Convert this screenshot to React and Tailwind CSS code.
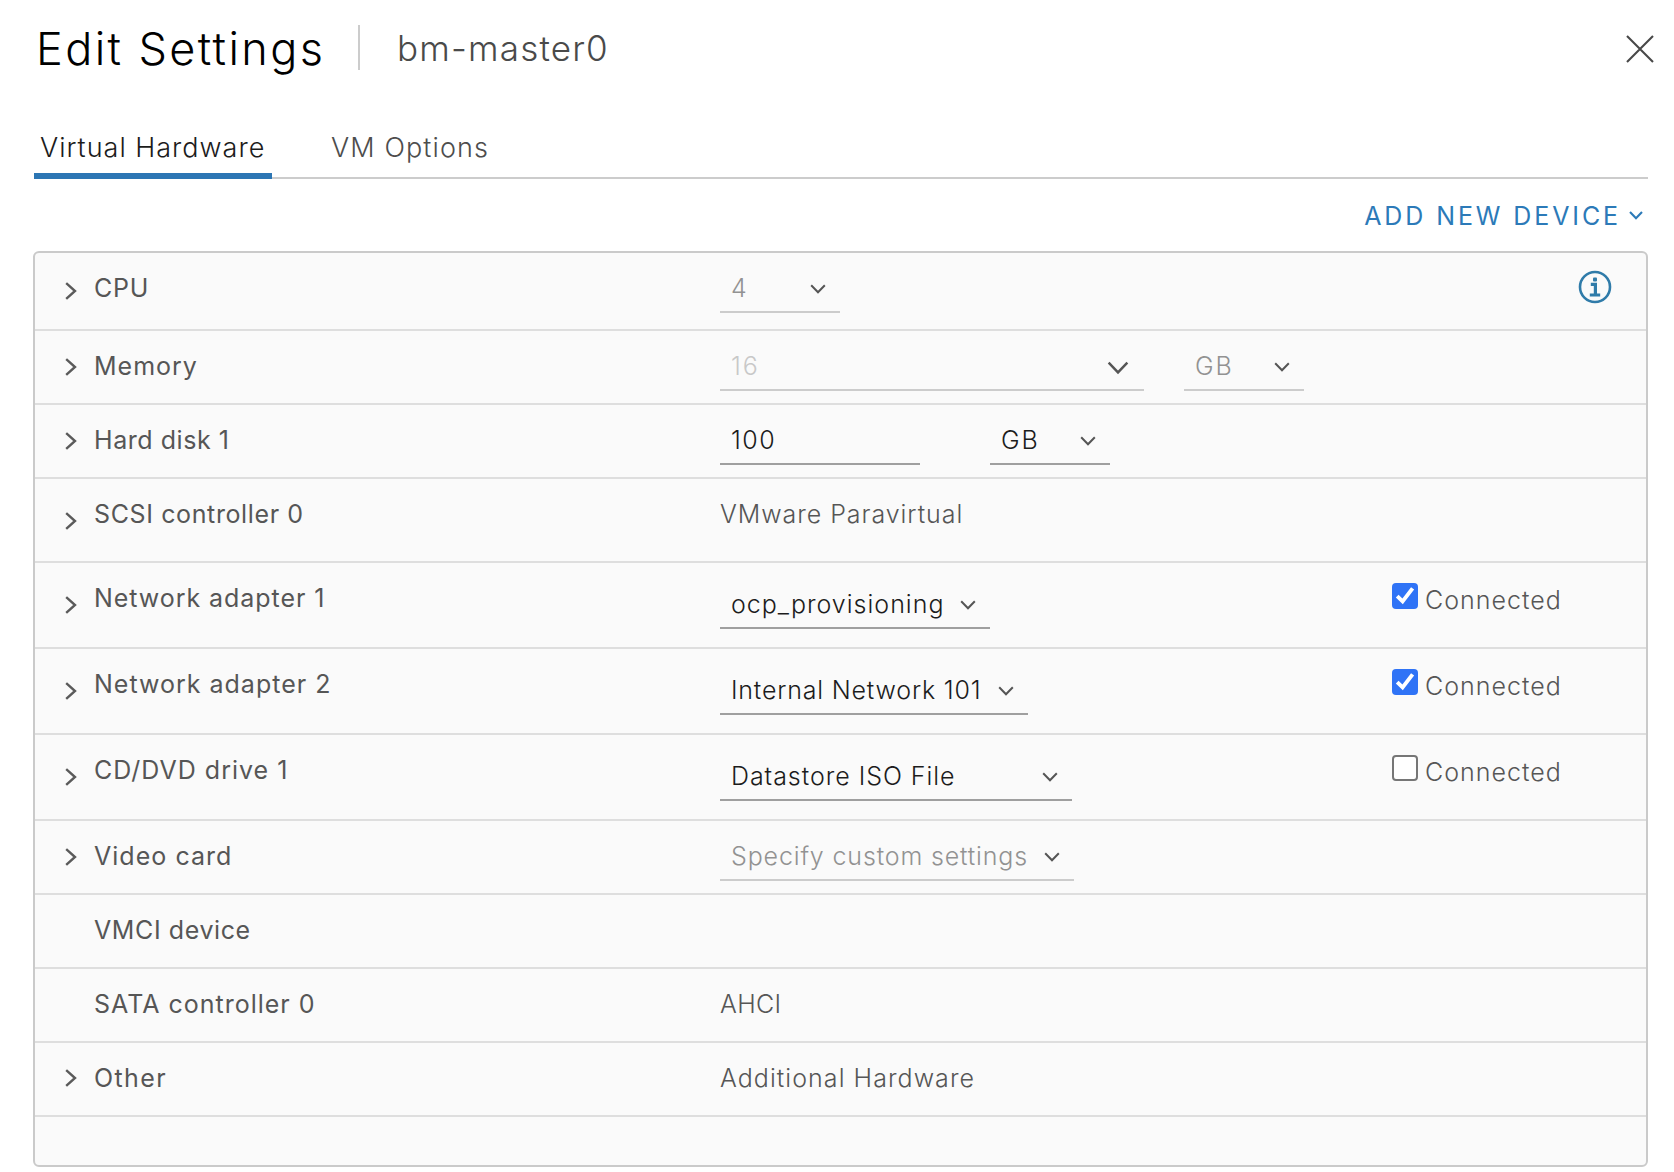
import React from "react";

const chevronDown = "M1.2 1.2 L8 8.2 L14.8 1.2";

function ChevronDown({ className = "", large = false }) {
  return (
    <svg
      viewBox="0 0 16 10"
      className={`shrink-0 ${large ? "mt-1 h-[14px] w-[22px]" : "mt-[2px] h-[10px] w-4"} ${className}`}
      fill="none"
      preserveAspectRatio="none"
    >
      <path d={chevronDown} stroke="currentColor" strokeWidth={large ? 1.8 : 2} />
    </svg>
  );
}

function Select({ text, tracking, width, gap = "mt-3", disabled, faded, large, end = "pr-[14px]", arrow = true, className = "" }) {
  const color = faded ? "text-[#c8c8c8]" : disabled ? "text-[#929292]" : "text-[#1c1c1c]";
  const line = disabled ? "border-[#cccccc]" : "border-[#9f9f9f]";
  return (
    <div className={`flex h-12 items-center justify-between border-b-2 pl-[11px] ${gap} ${width} ${line} ${end} ${className}`}>
      <span className={`whitespace-nowrap text-[25px] font-[330] leading-9 ${tracking} ${color}`}>{text}</span>
      {arrow && <ChevronDown large={large} className="text-[#555555]" />}
    </div>
  );
}

function Value({ text, tracking }) {
  return (
    <span className={`mt-[17px] whitespace-nowrap text-[25px] font-[330] leading-9 text-[#565656] ${tracking}`}>{text}</span>
  );
}

function Connected({ checked }) {
  return (
    <label className="flex w-[254px] items-start">
      <span
        className={`mt-5 flex size-[26px] items-center justify-center rounded-[4px] ${
          checked ? "bg-[#2f73f6]" : "border-2 border-[#767676] bg-white"
        }`}
      >
        {checked && (
          <svg viewBox="0 0 26 26" className="size-[26px]" fill="none">
            <path d="M5.2 13.2 L10.6 18.4 L20.6 5.4" stroke="#fff" strokeWidth="3.9" />
          </svg>
        )}
      </span>
      <span className="ml-[7px] mt-[19px] whitespace-nowrap text-[25px] font-[330] leading-9 tracking-[1px] text-[#565656]">
        Connected
      </span>
    </label>
  );
}

function Row({ label, tracking, height, arrow, children, right }) {
  return (
    <div className={`flex items-start border-b-2 border-[#dedede] ${height}`}>
      <div className="flex w-[59px] pl-[30px]">
        {arrow && (
          <svg viewBox="0 0 12 18" className={`h-[18px] w-3 ${arrow}`} fill="none">
            <path d="M1.2 1.2 L10 9 L1.2 16.8" stroke="#5a5a5a" strokeWidth="2.4" />
          </svg>
        )}
      </div>
      <div className={`mt-[17px] w-[626px] whitespace-nowrap text-[25px] leading-9 text-[#565656] ${tracking}`}>{label}</div>
      <div className="flex flex-1 items-start">{children}</div>
      {right}
    </div>
  );
}

export default function App() {
  return (
    <div className="flex h-[1172px] w-[1674px] flex-col bg-white font-['Inter',sans-serif] [font-variant-ligatures:none]">
      <header className="flex h-[100px] items-start pl-[36px] pr-5">
        <h1 className="mt-[18px] w-[322px] whitespace-nowrap text-[45px] font-[260] leading-[62px] tracking-[2.4px] text-black">
          Edit Settings
        </h1>
        <div className="mt-[25px] h-[45px] w-[2px] bg-[#cccccc]" />
        <div className="ml-[37px] mt-[23px] flex-1 whitespace-nowrap text-[35px] font-[260] leading-[50px] tracking-[1.2px] text-[#4a4a4a]">
          bm-master0
        </div>
        <svg viewBox="0 0 28 28" className="mt-[35px] size-7" fill="none">
          <path d="M1 1 L27 27 M27 1 L1 27" stroke="#484848" strokeWidth="2.1" />
        </svg>
      </header>

      <nav className="ml-[34px] mr-[26px] flex h-[79px] items-end border-b-2 border-[#cccccc]">
        <div className="-mb-[2px] flex h-[58px] w-[238px] items-start border-b-[6px] border-[#2c76b4] pl-[6px]">
          <span className="mt-[9px] whitespace-nowrap text-[27px] font-[330] leading-9 tracking-[1px] text-[#1c1c1c]">
            Virtual Hardware
          </span>
        </div>
        <div className="-mb-[2px] flex h-[58px] items-start pl-[59px]">
          <span className="mt-[9px] whitespace-nowrap text-[27px] font-[330] leading-9 tracking-[1.1px] text-[#4d4d4d]">
            VM Options
          </span>
        </div>
      </nav>

      <div className="flex h-[72px] items-center justify-end pr-[31px] text-[#2c7ab8]">
        <span className="mt-[2px] whitespace-nowrap text-[25px] leading-9 tracking-[2.9px]">ADD NEW DEVICE</span>
        <svg viewBox="0 0 14 9" className="ml-[8px] h-[9px] w-[14px]" fill="none">
          <path d="M1 1 L7 7.2 L13 1" stroke="currentColor" strokeWidth="2.1" />
        </svg>
      </div>

      <section className="ml-[33px] flex h-[916px] w-[1615px] flex-col rounded-[6px] border-2 border-[#cacaca] bg-[#fafafa]">
        <Row
          label="CPU"
          tracking="tracking-[0.7px]"
          height="h-[78px]"
          arrow="mt-[29px]"
          right={
            <svg viewBox="0 0 34 34" className="mr-[34px] mt-[17px] size-[34px]" fill="none">
              <circle cx="17" cy="17" r="15" stroke="#2f7ba9" strokeWidth="2.6" />
              <rect x="15" y="7.4" width="4" height="4" rx="1" fill="#2f7ba9" />
              <path d="M12.8 14.4 H17.4 V25 M11.8 25 H22.2" stroke="#2f7ba9" strokeWidth="3.2" />
            </svg>
          }
        >
          <Select text="4" tracking="tracking-normal" width="w-[120px]" disabled />
        </Row>
        <Row label="Memory" tracking="tracking-[1px]" height="h-[74px]" arrow="mt-[27px]">
          <Select text="16" tracking="tracking-[1.8px]" width="w-[424px]" end="pr-[15px]" disabled faded large />
          <Select text="GB" tracking="tracking-[2px]" width="w-[120px]" className="ml-10" disabled />
        </Row>
        <Row label="Hard disk 1" tracking="tracking-[0.55px]" height="h-[74px]" arrow="mt-[27px]">
          <Select text="100" tracking="tracking-[1.5px]" width="w-[200px]" arrow={false} />
          <Select text="GB" tracking="tracking-[2px]" width="w-[120px]" className="ml-[70px]" />
        </Row>
        <Row label="SCSI controller 0" tracking="tracking-[0.62px]" height="h-[84px]" arrow="mt-[33px]">
          <Value text="VMware Paravirtual" tracking="tracking-[0.95px]" />
        </Row>
        <Row
          label="Network adapter 1"
          tracking="tracking-[0.95px]"
          height="h-[86px]"
          arrow="mt-[33px]"
          right={<Connected checked />}
        >
          <Select text="ocp_provisioning" tracking="tracking-[1px]" width="w-[270px]" gap="mt-[18px]" />
        </Row>
        <Row
          label="Network adapter 2"
          tracking="tracking-[1px]"
          height="h-[86px]"
          arrow="mt-[33px]"
          right={<Connected checked />}
        >
          <Select text="Internal Network 101" tracking="tracking-[0.8px]" width="w-[308px]" gap="mt-[18px]" />
        </Row>
        <Row
          label="CD/DVD drive 1"
          tracking="tracking-[1px]"
          height="h-[86px]"
          arrow="mt-[33px]"
          right={<Connected />}
        >
          <Select text="Datastore ISO File" tracking="tracking-[0.95px]" width="w-[352px]" gap="mt-[18px]" />
        </Row>
        <Row label="Video card" tracking="tracking-[1.03px]" height="h-[74px]" arrow="mt-[27px]">
          <Select text="Specify custom settings" tracking="tracking-[0.85px]" width="w-[354px]" disabled />
        </Row>
        <Row label="VMCI device" tracking="tracking-[0.6px]" height="h-[74px]" />
        <Row label="SATA controller 0" tracking="tracking-[1px]" height="h-[74px]">
          <Value text="AHCI" tracking="tracking-[0.3px]" />
        </Row>
        <Row label="Other" tracking="tracking-[1.4px]" height="h-[74px]" arrow="mt-[26px]">
          <Value text="Additional Hardware" tracking="tracking-[1.05px]" />
        </Row>
      </section>
    </div>
  );
}
